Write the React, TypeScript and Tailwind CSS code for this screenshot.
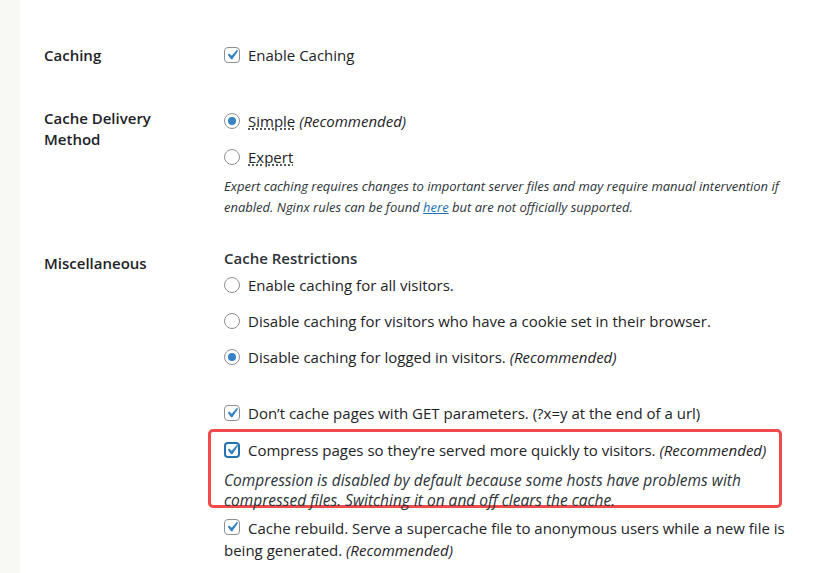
import React from "react";

const FONT = { fontFamily: '"Open Sans", "Noto Sans", sans-serif' };

function Check({ focus = false }: { focus?: boolean }) {
  return (
    <span
      className={`inline-flex h-4 w-4 shrink-0 items-center justify-center overflow-visible rounded-[4px] bg-white align-[-3px] ${
        focus ? "border-2 border-[#2271b1]" : "border border-[#8c8f94]"
      }`}
    >
      <svg viewBox="0 0 20 20" className="-m-[4px] h-[20px] w-[20px] shrink-0">
        <path
          d="M14.83 4.89l1.34.94-5.81 8.38H9.02L5.78 9.67l1.34-1.25 2.57 2.4z"
          fill="#3582c4"
        />
      </svg>
    </span>
  );
}

function Radio({ on = false }: { on?: boolean }) {
  return (
    <span className="inline-flex h-4 w-4 shrink-0 items-center justify-center rounded-full border border-[#8c8f94] bg-white">
      {on && <span className="h-2 w-2 rounded-full bg-[#3582c4]" />}
    </span>
  );
}

function Rec() {
  return <em className="italic">(Recommended)</em>;
}

export default function App() {
  return (
    <div className="flex min-h-screen text-[15px] text-[#1d2327]" style={FONT}>
      <div className="w-[20px] shrink-0 bg-[#f8f8f4]" />
      <div className="flex-1 bg-white pl-[24px] pt-[43px]">
        {/* Caching */}
        <div className="grid grid-cols-[180px_1fr]">
          <div className="font-semibold leading-[24px]">Caching</div>
          <div className="flex h-[24px] items-center gap-2">
            <Check />
            <span>Enable Caching</span>
          </div>
        </div>

        {/* Cache Delivery Method */}
        <div className="mt-[41px] grid grid-cols-[180px_1fr]">
          <div className="font-semibold leading-[21px]">
            Cache Delivery
            <br />
            Method
          </div>
          <div>
            <div className="flex h-[26px] items-center gap-2">
              <Radio on />
              <span>
                <span className="underline decoration-dotted underline-offset-2">Simple</span>{" "}
                <Rec />
              </span>
            </div>
            <div className="mt-[10px] flex h-[26px] items-center gap-2">
              <Radio />
              <span className="underline decoration-dotted underline-offset-2">Expert</span>
            </div>
            <p className="mt-[6px] text-[13px] italic leading-[21px] text-[#2c3338]">
              Expert caching requires changes to important server files and may require manual intervention if
              <br />
              enabled. Nginx rules can be found{" "}
              <a className="text-[#2271b1] underline">here</a> but are not officially supported.
            </p>
          </div>
        </div>

        {/* Miscellaneous */}
        <div className="mt-[28px] grid grid-cols-[180px_1fr]">
          <div className="pt-[5px] font-semibold leading-[24px]">Miscellaneous</div>
          <div>
            <div className="font-semibold leading-[24px] text-[#2c3338]">Cache Restrictions</div>
            <div className="mt-[3px] flex h-[24px] items-center gap-2">
              <Radio />
              <span>Enable caching for all visitors.</span>
            </div>
            <div className="mt-[12px] flex h-[24px] items-center gap-2">
              <Radio />
              <span>Disable caching for visitors who have a cookie set in their browser.</span>
            </div>
            <div className="mt-[12px] flex h-[24px] items-center gap-2">
              <Radio on />
              <span>
                Disable caching for logged in visitors. <Rec />
              </span>
            </div>
            <div className="mt-[32px] flex h-[24px] items-center gap-2">
              <Check />
              <span>Don’t cache pages with GET parameters. (?x=y at the end of a url)</span>
            </div>

            <div className="-ml-[16px] mt-[4px] h-[79px] w-[574px] rounded-[5px] border-[3px] border-[#f04a4a] pl-[13px] pt-[6px]">
              <div className="flex h-[24px] items-center gap-2">
                <Check focus />
                <span>
                  Compress pages so they’re served more quickly to visitors. <Rec />
                </span>
              </div>
              <p className="mt-[8px] text-[15.5px] italic leading-[20px] text-[#2c3338]">
                Compression is disabled by default because some hosts have problems with
                <br />
                compressed files. Switching it on and off clears the cache.
              </p>
            </div>

            <p className="mt-[9px] leading-[22px]">
              <Check />
              <span className="ml-2">
                Cache rebuild. Serve a supercache file to anonymous users while a new file is
              </span>
              <br />
              being generated. <Rec />
            </p>
          </div>
        </div>
      </div>
    </div>
  );
}
